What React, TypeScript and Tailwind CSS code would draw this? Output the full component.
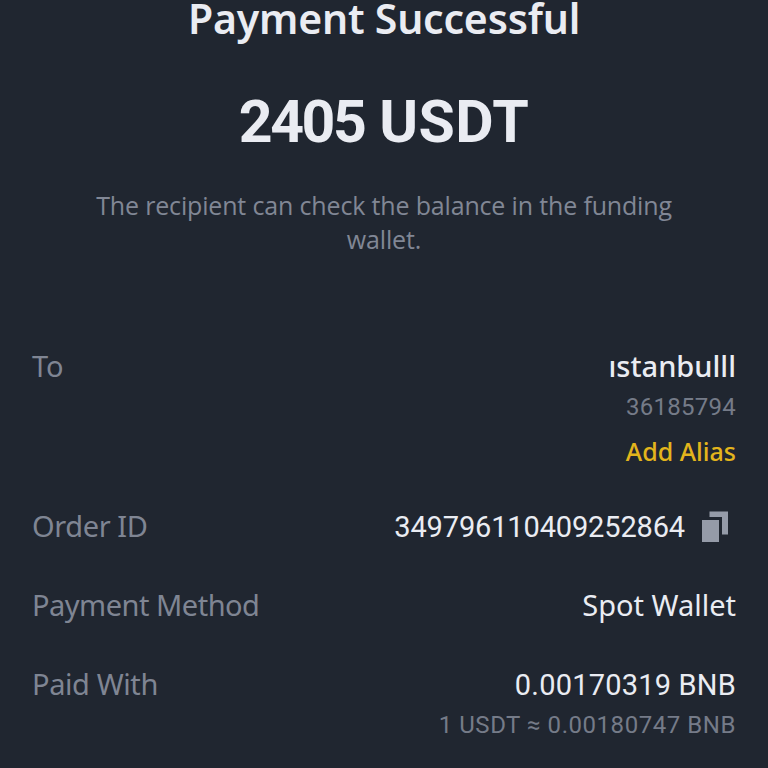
import React from "react";

const CopyIcon = () => (
    <svg viewBox="0 0 26 31" className="h-[31px] w-[26px] shrink-0 fill-[#959ba8]">
        <path d="M7.5 0.5H26V23.5H20V6H7.5V0.5Z" />
        <path d="M0 9H17V31H0V9Z" />
    </svg>
);

export default function App() {
    return (
        <main className="h-[768px] w-full overflow-hidden bg-[#202630] font-['Noto_Sans',sans-serif] whitespace-nowrap text-[#eaecf2]">
            {/* Status and amount */}
            <header className="flex flex-col items-center">
                <h1 className="text-[41px] leading-9 font-semibold tracking-[-0.2px]">
                    <span>Payment Successful</span>
                </h1>
                <p className="mt-[52px] font-['Roboto',sans-serif] text-[59px] leading-[68px] font-bold">
                    <span className="tracking-[-2.5px]">2405</span>
                    <span className="tracking-[0.4px]"> USDT</span>
                </p>
                <p className="mt-8 text-center font-['Open_Sans',sans-serif] text-[25px] leading-[34px] tracking-[-0.16px] text-[#818795]">
                    <span>The recipient can check the balance in the funding</span>
                    <br />
                    <span>wallet.</span>
                </p>
            </header>

            {/* Order details */}
            <section className="mt-[90px] flex flex-col pr-8 pl-8 text-[29px] leading-10">
                <div className="flex h-40 justify-between">
                    <span className="text-[#7f8593]">To</span>
                    <div className="flex flex-col items-end">
                        <span className="font-medium">ıstanbulll</span>
                        <span className="font-['Roboto',sans-serif] text-2xl leading-[42px] tracking-[0.25px] text-[#757b88]">36185794</span>
                        <button className="text-[25px] leading-[46px] font-medium text-[#e3b51c]">Add Alias</button>
                    </div>
                </div>
                <div className="flex h-[79px] justify-between">
                    <span className="tracking-[-0.4px] text-[#7f8593]">Order ID</span>
                    <div className="flex h-10 items-center gap-[17px] pr-2">
                        <span className="pt-px font-['Roboto',sans-serif] tracking-[-0.15px]">349796110409252864</span>
                        <CopyIcon />
                    </div>
                </div>
                <div className="flex h-[79px] justify-between">
                    <span className="tracking-[-0.5px] text-[#7f8593]">Payment Method</span>
                    <span>Spot Wallet</span>
                </div>
                <div className="flex justify-between">
                    <span className="tracking-[-0.4px] text-[#7f8593]">Paid With</span>
                    <div className="flex flex-col items-end">
                        <span className="pt-px font-['Roboto',sans-serif] tracking-[0.2px]">0.00170319 BNB</span>
                        <span className="font-['Roboto',sans-serif] text-2xl leading-10 tracking-[0.55px] text-[#757b88]">1 USDT ≈ 0.00180747 BNB</span>
                    </div>
                </div>
            </section>
        </main>
    );
}
